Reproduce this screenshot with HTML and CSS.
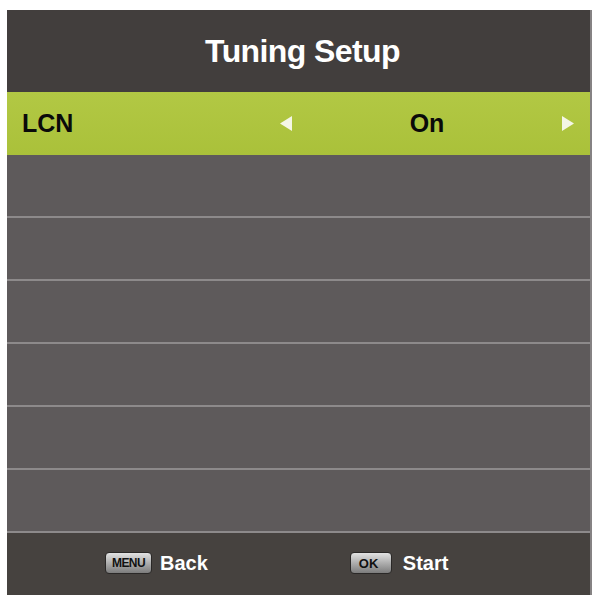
FILE: index.html
```html
<!DOCTYPE html>
<html>
<head>
<meta charset="utf-8">
<link rel="stylesheet" href="styles.css">
</head>
<body>
<div class="panel">
  <div class="header">Tuning Setup</div>
  <div class="row row-active">
    <div class="label">LCN</div>
    <div class="value">
      <svg class="arrow" width="12" height="15" viewBox="0 0 12 15"><path d="M12 0 L0 7.5 L12 15 Z" fill="#f4f6e6"/></svg>
      <span class="value-text">On</span>
      <svg class="arrow" width="12" height="15" viewBox="0 0 12 15"><path d="M0 0 L12 7.5 L0 15 Z" fill="#f4f6e6"/></svg>
    </div>
  </div>
  <div class="row"></div>
  <div class="row"></div>
  <div class="row"></div>
  <div class="row"></div>
  <div class="row"></div>
  <div class="row"></div>
  <div class="footer">
    <div class="hint"><span class="key key-menu">MENU</span><span class="hint-text">Back</span></div>
    <div class="hint"><span class="key key-ok">OK</span><span class="hint-text">Start</span></div>
  </div>
</div>
</body>
</html>
```
FILE: styles.css
```css
html, body {
  margin: 0;
  padding: 0;
  background: #ffffff;
}
body {
  font-family: "Liberation Sans", Arial, sans-serif;
  padding: 10px 0 0 7px;
}
.panel {
  width: 583px;
  height: 585px;
  background: #5e5a5b;
  border-right: 2px solid #858283;
  display: flex;
  flex-direction: column;
  overflow: hidden;
}
.header {
  height: 82px;
  flex: none;
  background: #423e3d;
  color: #ffffff;
  font-weight: bold;
  font-size: 32px;
  letter-spacing: -0.6px;
  display: flex;
  align-items: center;
  justify-content: center;
  padding-left: 8px;
  box-sizing: border-box;
}
.row {
  height: 61px;
  flex: none;
  border-bottom: 2px solid #8d8a8b;
  background: #5e5a5b;
}
.row-active {
  height: 63px;
  border-bottom: none;
  background: linear-gradient(#b2c844, #aac13a);
  display: grid;
  grid-template-columns: 258px 294px;
  align-items: center;
  padding: 0 16px 0 15px;
}
.label {
  font-weight: bold;
  font-size: 25px;
  color: #0a0a0a;
}
.value {
  display: flex;
  align-items: center;
  justify-content: space-between;
}
.value-text {
  font-weight: bold;
  font-size: 25px;
  color: #0a0a0a;
}
.footer {
  flex: 1;
  background: #46423f;
  display: flex;
  align-items: center;
  padding: 0 0 2px 98px;
  gap: 142px;
}
.hint {
  display: flex;
  align-items: center;
  gap: 8px;
}
.key {
  height: 22px;
  box-sizing: border-box;
  border-radius: 4px;
  border: 1px solid #2a2827;
  background: linear-gradient(#e2e2e2, #a9a9a9 55%, #7c7c7c);
  color: #111;
  font-weight: bold;
  font-size: 12px;
  display: flex;
  align-items: center;
}
.key-menu {
  width: 47px;
  justify-content: center;
  letter-spacing: -0.6px;
}
.key-ok {
  width: 42px;
  padding-left: 8px;
  font-size: 13px;
  margin-right: 3px;
}
.hint-text {
  color: #ffffff;
  font-weight: bold;
  font-size: 20px;
}
```
